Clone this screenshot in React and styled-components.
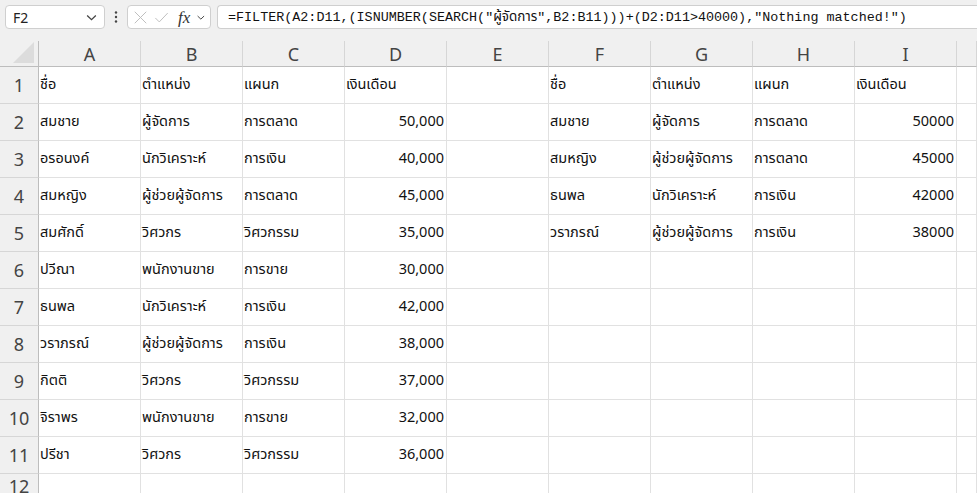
import React from "react";
import styled, { createGlobalStyle } from "styled-components";

const Global = createGlobalStyle`
  html, body { margin: 0; padding: 0; background: #ffffff; overflow: hidden; }
  * { box-sizing: border-box; }
`;

const Page = styled.div`
  width: 977px;
  height: 493px;
  overflow: hidden;
  background: #ffffff;
  font-family: "Segoe UI", "Noto Sans Thai", "Leelawadee UI", "Noto Sans", "DejaVu Sans", sans-serif;
`;

const Toolbar = styled.div`
  height: 41px;
  background: #f0f0f0;
  display: flex;
  align-items: flex-start;
  padding: 5px 0 0 5px;
`;

const Box = styled.div`
  height: 24px;
  background: #ffffff;
  border: 1px solid #cfcfcf;
  border-radius: 4px;
  display: flex;
  align-items: center;
`;

const NameBox = styled(Box)`
  width: 100px;
  padding: 0 6px 0 7px;
  justify-content: space-between;
  font-family: "Segoe UI", "Noto Sans", "Liberation Sans", sans-serif;
  font-size: 14px;
  color: #222;
`;

const Dots = styled.div`
  width: 22px;
  height: 24px;
  display: flex;
  align-items: center;
  justify-content: center;
`;

const FxBox = styled(Box)`
  width: 84px;
  padding: 0 4px 0 5px;
  gap: 6px;
`;

const FormulaBox = styled(Box)`
  margin-left: 6px;
  flex: 1;
  border-right: none;
  border-radius: 4px 0 0 4px;
  padding-left: 10px;
  font-family: "Liberation Mono", "DejaVu Sans Mono", "Noto Sans Thai", monospace;
  font-size: 13.4px;
  color: #111;
  white-space: nowrap;
  overflow: hidden;
`;

const FxText = styled.span`
  font-family: "Liberation Serif", serif;
  font-style: italic;
  font-size: 17px;
  color: #333;
  margin-left: 3px;
  line-height: 1;
`;

const Grid = styled.div`
  display: grid;
  grid-template-columns: 39px repeat(9, 102px) 1fr;
  grid-template-rows: 26px repeat(11, 37px) 1fr;
  height: 452px;
`;

const Corner = styled.div`
  background: #f0f0f0;
  border-right: 1px solid #bdbdbd;
  border-bottom: 1px solid #bdbdbd;
  position: relative;
  &::after {
    content: "";
    position: absolute;
    right: 4px;
    bottom: 3px;
    width: 0;
    height: 0;
    border-left: 21px solid transparent;
    border-bottom: 21px solid #dcdcdc;
  }
`;

const ColHead = styled.div`
  background: #f0f0f0;
  border-right: 1px solid #d6d6d6;
  border-bottom: 1px solid #bdbdbd;
  display: flex;
  align-items: center;
  justify-content: center;
  font-family: "Segoe UI", "Noto Sans", "Liberation Sans", sans-serif;
  font-size: 18px;
  color: #444;
  padding-top: 1px;
`;

const RowHead = styled.div`
  background: #f0f0f0;
  border-right: 1px solid #bdbdbd;
  border-bottom: 1px solid #d6d6d6;
  display: flex;
  align-items: center;
  justify-content: center;
  font-family: "Segoe UI", "Noto Sans", "Liberation Sans", sans-serif;
  font-size: 18px;
  color: #444;
`;

const Cell = styled.div`
  border-right: 1px solid #e1e1e1;
  border-bottom: 1px solid #e1e1e1;
  display: flex;
  align-items: center;
  justify-content: ${(p) => (p.$num ? "flex-end" : "flex-start")};
  padding: ${(p) => (p.$num ? "0 2px 0 0" : "0 0 0 1px")};
  font-size: 14.5px;
  color: #111;
  white-space: nowrap;
  overflow: hidden;
`;

const Chevron = ({ size = 12 }) => (
  <svg width={size} height={size} viewBox="0 0 12 12">
    <path d="M2 4.2 L6 8 L10 4.2" fill="none" stroke="#444" strokeWidth="1.2" />
  </svg>
);

const cols = ["A", "B", "C", "D", "E", "F", "G", "H", "I", "J"];

const left = [
  ["ชื่อ", "ตำแหน่ง", "แผนก", "เงินเดือน"],
  ["สมชาย", "ผู้จัดการ", "การตลาด", "50,000"],
  ["อรอนงค์", "นักวิเคราะห์", "การเงิน", "40,000"],
  ["สมหญิง", "ผู้ช่วยผู้จัดการ", "การตลาด", "45,000"],
  ["สมศักดิ์", "วิศวกร", "วิศวกรรม", "35,000"],
  ["ปวีณา", "พนักงานขาย", "การขาย", "30,000"],
  ["ธนพล", "นักวิเคราะห์", "การเงิน", "42,000"],
  ["วราภรณ์", "ผู้ช่วยผู้จัดการ", "การเงิน", "38,000"],
  ["กิตติ", "วิศวกร", "วิศวกรรม", "37,000"],
  ["จิราพร", "พนักงานขาย", "การขาย", "32,000"],
  ["ปรีชา", "วิศวกร", "วิศวกรรม", "36,000"],
];

const right = [
  ["ชื่อ", "ตำแหน่ง", "แผนก", "เงินเดือน"],
  ["สมชาย", "ผู้จัดการ", "การตลาด", "50000"],
  ["สมหญิง", "ผู้ช่วยผู้จัดการ", "การตลาด", "45000"],
  ["ธนพล", "นักวิเคราะห์", "การเงิน", "42000"],
  ["วราภรณ์", "ผู้ช่วยผู้จัดการ", "การเงิน", "38000"],
];

const rowValues = (r) => {
  const a = left[r] || ["", "", "", ""];
  const f = right[r] || ["", "", "", ""];
  return [...a, "", ...f, ""];
};

const isNum = (v) => /^[0-9,]+$/.test(v);

export default function App() {
  const rows = [];
  for (let r = 0; r < 12; r++) {
    const vals = r < 11 ? rowValues(r) : Array(10).fill("");
    rows.push(
      <React.Fragment key={r}>
        <RowHead>{r + 1}</RowHead>
        {vals.map((v, c) => (
          <Cell key={c} $num={isNum(v)}>
            {v}
          </Cell>
        ))}
      </React.Fragment>
    );
  }
  return (
    <Page>
      <Global />
      <Toolbar>
        <NameBox>
          <span>F2</span>
          <Chevron size={13} />
        </NameBox>
        <Dots>
          <svg width="4" height="14" viewBox="0 0 4 14">
            <circle cx="2" cy="2.5" r="1.2" fill="#444" />
            <circle cx="2" cy="7" r="1.2" fill="#444" />
            <circle cx="2" cy="11.5" r="1.2" fill="#444" />
          </svg>
        </Dots>
        <FxBox>
          <svg width="17" height="17" viewBox="0 0 17 17">
            <path d="M2 2 L15 15 M15 2 L2 15" stroke="#bdbdbd" strokeWidth="1.1" fill="none" />
          </svg>
          <svg width="17" height="17" viewBox="0 0 17 17">
            <path d="M1.5 9 L6 13.5 L15.5 3.5" stroke="#bdbdbd" strokeWidth="1.1" fill="none" />
          </svg>
          <FxText>fx</FxText>
          <Chevron size={11} />
        </FxBox>
        <FormulaBox>
          =FILTER(A2:D11,(ISNUMBER(SEARCH("ผู้จัดการ",B2:B11)))+(D2:D11&gt;40000),"Nothing matched!")
        </FormulaBox>
      </Toolbar>
      <Grid>
        <Corner />
        {cols.map((c) => (
          <ColHead key={c}>{c === "J" ? "" : c}</ColHead>
        ))}
        {rows}
      </Grid>
    </Page>
  );
}
